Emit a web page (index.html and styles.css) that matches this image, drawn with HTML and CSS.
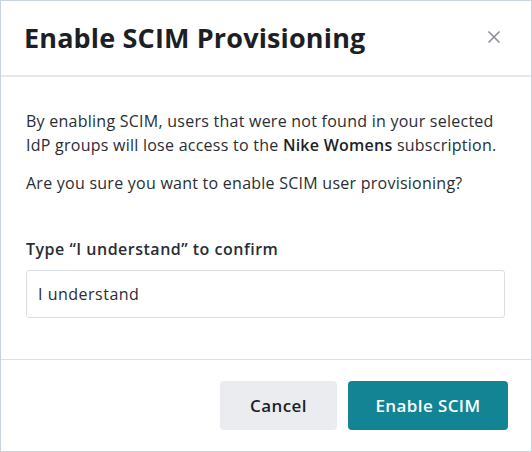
FILE: index.html
```html
<!DOCTYPE html>
<html lang="en">
<head>
  <meta charset="UTF-8">
  <title>Enable SCIM Provisioning</title>
  <link rel="stylesheet" href="styles.css">
</head>
<body>
  <div class="modal">
    <div class="modal-header">
      <h1 class="modal-title">Enable SCIM Provisioning</h1>
      <button class="close-btn" aria-label="Close">
        <svg width="14" height="14" viewBox="0 0 14 14">
          <path d="M1.5 1.5 L12.5 12.5 M12.5 1.5 L1.5 12.5" stroke="#8d9098" stroke-width="1.6" fill="none"/>
        </svg>
      </button>
    </div>

    <div class="modal-body">
      <p>By enabling SCIM, users that were not found in your selected<br>IdP groups will lose access to the <strong>Nike Womens</strong> subscription.</p>
      <p>Are you sure you want to enable SCIM user provisioning?</p>

      <label class="field-label" for="confirm">Type “I understand” to confirm</label>
      <input class="field-input" id="confirm" type="text" value="I understand">
    </div>

    <div class="modal-footer">
      <button class="btn btn-secondary">Cancel</button>
      <button class="btn btn-primary">Enable SCIM</button>
    </div>
  </div>
</body>
</html>
```

FILE: styles.css
```css
html, body {
  margin: 0;
  padding: 0;
  background: #fff;
  font-family: "Open Sans", sans-serif;
  color: #2a2d34;
}
.modal {
  width: 532px;
  height: 452px;
  box-sizing: border-box;
  border: 1px solid #c9d3dd;
  display: flex;
  flex-direction: column;
}
.modal-header {
  height: 76px;
  box-sizing: border-box;
  border-bottom: 2px solid #e6e7eb;
  display: flex;
  align-items: center;
  justify-content: space-between;
  padding: 0 30px 2px 23px;
}
.modal-title {
  margin: 0;
  font-size: 27px;
  font-weight: 700;
  letter-spacing: 0.15px;
  color: #1d1f26;
}
.close-btn {
  border: 0;
  background: none;
  padding: 0;
  display: flex;
}
.modal-body {
  flex: 1;
  padding: 32px 26px 0 25px;
  font-size: 16px;
  letter-spacing: 0.25px;
  line-height: 24px;
}
.modal-body p {
  margin: 0 0 14px 0;
  white-space: nowrap;
}
.modal-body strong {
  font-weight: 600;
  color: #1d1f26;
}
.field-label {
  display: block;
  margin-top: 42px;
  margin-bottom: 9px;
  font-weight: 600;
  letter-spacing: 0.5px;
  color: #2a2d34;
}
.field-input {
  display: block;
  width: 100%;
  height: 48px;
  box-sizing: border-box;
  border: 1px solid #dcdee5;
  border-radius: 3px;
  padding: 0 11px;
  font-family: inherit;
  font-size: 16px;
  letter-spacing: 0.5px;
  color: #2a2d34;
}
.modal-footer {
  height: 92px;
  box-sizing: border-box;
  border-top: 1px solid #dcdfe4;
  display: flex;
  justify-content: flex-end;
  align-items: center;
  gap: 11px;
  padding: 0 23px 0 0;
}
.btn {
  height: 49px;
  border: 0;
  border-radius: 4px;
  font-family: inherit;
  font-size: 17px;
  font-weight: 600;
  letter-spacing: 0.4px;
  padding: 0;
}
.btn-secondary {
  background: #ebecf0;
  color: #1d1f26;
  width: 117px;
}
.btn-primary {
  background: #138494;
  color: #fff;
  width: 160px;
}
```
